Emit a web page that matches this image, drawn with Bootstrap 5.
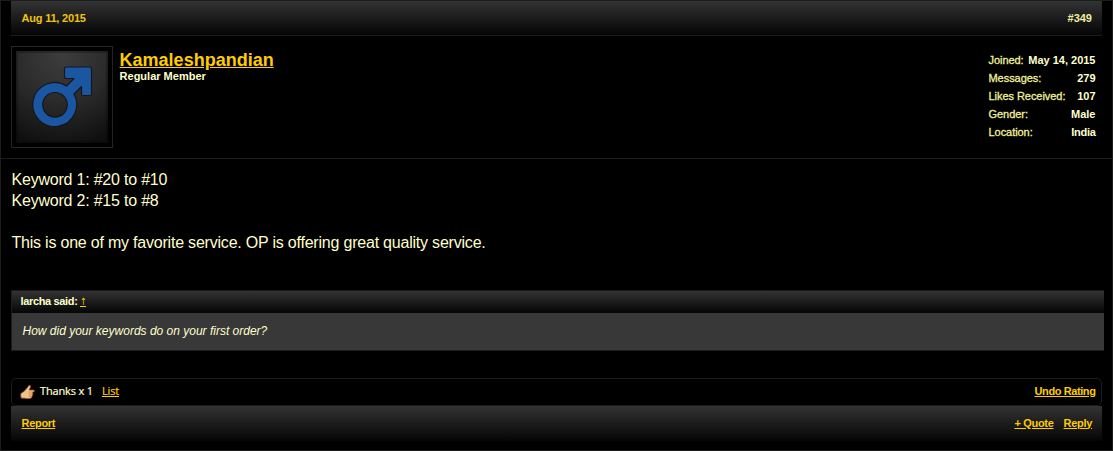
<!DOCTYPE html>
<html lang="en">
<head>
<meta charset="utf-8">
<meta name="viewport" content="width=device-width, initial-scale=1">
<title>Forum post #349</title>
<link href="https://cdn.jsdelivr.net/npm/bootstrap@5.3.0/dist/css/bootstrap.min.css" rel="stylesheet">
<style>
body{background:#000;color:#ffffcc;font-family:"Liberation Sans",Arial,sans-serif;font-size:11px;line-height:14px;overflow:hidden}
a{color:#fc0}
a:hover{color:#ffe066}
.post{height:451px;border:1px solid #1c1c1c}
.bar{background:linear-gradient(#333,#050505);margin:0 10px;padding:0 10px 0 10.5px;height:35px}
.bar-top{border-bottom:1px solid #1c1c1c}
.bar-bottom{padding-bottom:2px;gap:10px;letter-spacing:-.3px}
.date{color:#f0c30d;letter-spacing:-.2px}
.num{color:#eeeea0}
.user{height:123px;padding:10px 10px 0;border-bottom:1px solid #1c1c1c}
.avatar{width:102px;height:102px;padding:4px;border:1px solid #242424}
.avatar svg{display:block}
.who{padding:4px 0 0 6.6px}
.name{font-size:18px;line-height:20px;margin-bottom:-1px}
.stats{width:107px;margin-right:6.5px;padding-top:5px}
.stats dl div{height:18px;line-height:18px}
.stats dt{font-weight:400;color:#f0f09a;letter-spacing:-.05px;-webkit-text-stroke:.3px #f0f09a}
.stats dd{font-weight:700}
.stats .tight{letter-spacing:-.3px}
.message{height:131px;padding:10px 10.5px 0;font-size:16px;line-height:21px;letter-spacing:-.21px}
.quote{width:1093px;height:61px;margin:0 0 0 10px;border:1px solid #1c1c1c;border-right:0;background:#383838}
.quote-head{height:22px;padding:3px 8.5px 0;background:linear-gradient(#333,#050505);letter-spacing:-.35px}
.quote-head a{font-family:"DejaVu Sans",sans-serif;font-size:10px;display:inline-block;transform:scaleX(.75);transform-origin:left}
.quote-text{padding:11px 10.5px 0;font-size:12px}
.rating{height:28px;margin:27px 10px 0;padding:0 5.5px 2px 8px;border:1px solid #1c1c1c;border-radius:5px}
.rating svg{margin:2px 4px 0 0}
.thanks{font-family:"Open Sans","Noto Sans",sans-serif;letter-spacing:-.15px;-webkit-text-stroke:.2px}
.rating .list{margin-left:9px}
.undo{letter-spacing:-.4px}
</style>
</head>
<body>
<article class="post d-flex flex-column">
  <header class="bar bar-top d-flex justify-content-between align-items-center fw-bold flex-shrink-0">
    <span class="date">Aug 11, 2015</span><span class="num">#349</span>
  </header>
  <section class="user d-flex flex-shrink-0">
    <div class="avatar flex-shrink-0">
      <svg width="92" height="92" viewBox="0 0 92 92" role="img" aria-label="Avatar">
        <defs>
          <radialGradient id="glow" cx=".5" cy=".05" r="1"><stop offset="0" stop-color="#3d3d3d"/><stop offset=".5" stop-color="#2b2b2b"/><stop offset="1" stop-color="#0f0f0f"/></radialGradient>
        </defs>
        <path fill="url(#glow)" d="M0 0h92v92H0z"/>
        <path fill="none" stroke="#000" stroke-opacity=".25" stroke-width="4" d="M0 0h92v92H0z"/>
        <path fill="#1b56a2" fill-rule="evenodd" stroke="#151719" stroke-width="1.2" stroke-linejoin="round" d="M50 16H74Q75.500 16 75.500 17.500V43Q75.500 44.500 74 44.500H67Q65.500 44.500 65.500 43V35.500L58 43A22 22 0 1 1 50.500 35L58 27.500H50Q48.500 27.500 48.500 26V17.500Q48.500 16 50 16ZM39 41.500A12.300 12.300 0 1 0 39 66.100A12.300 12.300 0 1 0 39 41.500Z"/>
      </svg>
    </div>
    <div class="who flex-grow-1 fw-bold">
      <a class="name d-block" href="#">Kamaleshpandian</a>
      <div>Regular Member</div>
    </div>
    <div class="stats">
      <dl class="m-0">
        <div class="d-flex justify-content-between"><dt>Joined:</dt><dd class="m-0">May 14, 2015</dd></div>
        <div class="d-flex justify-content-between"><dt>Messages:</dt><dd class="m-0">279</dd></div>
        <div class="d-flex justify-content-between"><dt>Likes Received:</dt><dd class="m-0">107</dd></div>
        <div class="d-flex justify-content-between"><dt>Gender:</dt><dd class="m-0">Male</dd></div>
        <div class="d-flex justify-content-between"><dt>Location:</dt><dd class="m-0 tight">India</dd></div>
      </dl>
    </div>
  </section>
  <div class="message flex-shrink-0">Keyword 1: #20 to #10<br>Keyword 2: #15 to #8<br><br>This is one of my favorite service. OP is offering great quality service.</div>
  <blockquote class="quote flex-shrink-0">
    <div class="quote-head fw-bold">larcha said: <a class="fw-normal" href="#">↑</a></div>
    <div class="quote-text fst-italic">How did your keywords do on your first order?</div>
  </blockquote>
  <div class="rating d-flex align-items-center flex-shrink-0">
    <svg width="16" height="16" viewBox="0 0 16 16" aria-hidden="true">
      <path fill="#f3c28b" stroke="#8a4d20" stroke-width=".8" stroke-linejoin="round" d="M.8 9.500 4.500 7 8.200 2.500Q8.800 .8 10.300 1.400 11 2.500 10 4.200L9.200 6H13.500Q15.300 6.700 13.800 8H12.500Q13.500 9.200 12.500 10.100 13.200 11.300 12 12 12.300 13.500 11 14.200Q7 15.200 4.500 14.200H1.300Q.4 12 .8 9.500Z"/>
      <path stroke="#b97842" stroke-width=".7" d="M8.500 8.100H12.500M8.800 10.200H12.500M8.500 12.200H12"/>
    </svg>
    <span class="thanks">Thanks x 1</span>
    <a class="thanks list" href="#">List</a>
    <a class="undo ms-auto fw-bold" href="#">Undo Rating</a>
  </div>
  <footer class="bar bar-bottom d-flex align-items-center fw-bold flex-shrink-0">
    <a href="#">Report</a><a class="ms-auto" href="#">+ Quote</a><a href="#">Reply</a>
  </footer>
</article>
<script src="https://cdn.jsdelivr.net/npm/bootstrap@5.3.0/dist/js/bootstrap.bundle.min.js"></script>
</body>
</html>
